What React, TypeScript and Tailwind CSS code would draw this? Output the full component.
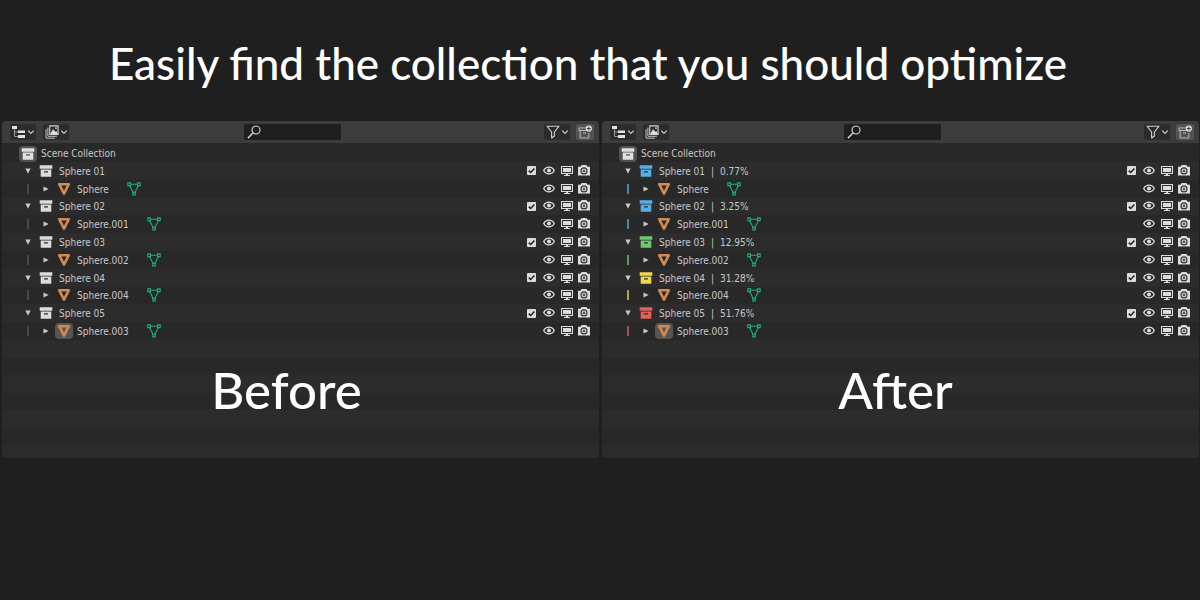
import React from 'react';

type Row = {
  name: string;
  percent?: string;
  object: string;
  color: string;
  active?: boolean;
};

const before: Row[] = [
  { name: 'Sphere 01', object: 'Sphere', color: '#dcdcdc' },
  { name: 'Sphere 02', object: 'Sphere.001', color: '#dcdcdc' },
  { name: 'Sphere 03', object: 'Sphere.002', color: '#dcdcdc' },
  { name: 'Sphere 04', object: 'Sphere.004', color: '#dcdcdc' },
  { name: 'Sphere 05', object: 'Sphere.003', color: '#dcdcdc', active: true },
];

const after: Row[] = [
  { name: 'Sphere 01', percent: '0.77%', object: 'Sphere', color: '#56aee6' },
  { name: 'Sphere 02', percent: '3.25%', object: 'Sphere.001', color: '#56aee6' },
  { name: 'Sphere 03', percent: '12.95%', object: 'Sphere.002', color: '#72c872' },
  { name: 'Sphere 04', percent: '31.28%', object: 'Sphere.004', color: '#ecd950' },
  { name: 'Sphere 05', percent: '51.76%', object: 'Sphere.003', color: '#e0605c', active: true },
];

const CollectionIcon = ({ color }: { color: string }) => (
  <svg width="14" height="14" viewBox="0 0 14 14" fill={color}>
    <path d="M.7 1.2h12.6v3.6H.7z" />
    <path fillRule="evenodd" d="M1.7 5.5h10.6v7.3H1.7zM5 7.2v1.4h4V7.2z" />
  </svg>
);

const ObjectIcon = () => (
  <svg width="14" height="14" viewBox="0 0 14 14" fill="none" stroke="#d08a52" strokeWidth="2.6" strokeLinejoin="round">
    <path d="M2.2 2.2h9.6L7 11.6z" />
  </svg>
);

const MeshIcon = () => (
  <svg width="14" height="14" viewBox="0 0 14 14" fill="none" stroke="#1fae7c" strokeWidth="1.1">
    <path d="M3.5 2.2h7M2.7 3.7l3.4 6.7M11.3 3.7l-3.4 6.7" />
    <path d="M.8.9h2.7v2.7H.8zM10.5.9h2.7v2.7h-2.7zM5.8 10.4h2.5v2.5H5.8z" />
  </svg>
);

const Chevron = () => (
  <svg width="8" height="8" viewBox="0 0 8 8" fill="none" stroke="#c8c8c8" strokeWidth="1.3">
    <path d="M1.2 2.6L4 5.4l2.8-2.8" />
  </svg>
);

const OutlinerIcon = () => (
  <svg width="14" height="14" viewBox="0 0 14 14">
    <path d="M2.5 3v8.5H6M2.5 7H6" fill="none" stroke="#999" strokeWidth="1" />
    <path d="M0 1h5v3H0zM6 5.5h7V8H6zM6 10h7v3H6z" fill="#e0e0e0" />
  </svg>
);

const DisplayIcon = () => (
  <svg width="14" height="14" viewBox="0 0 14 14" fill="none" stroke="#d4d4d4">
    <path d="M1 4.2v9h9M2.9 2.6v8.7h8.9" strokeWidth=".9" />
    <path d="M4.8.9h8.3v8.6H4.8z" strokeWidth="1.1" />
    <path d="M5.3 9l2.9-5 2 3 1-1.2L12.8 9z" fill="#e0e0e0" stroke="none" />
    <circle cx="11" cy="3.1" r=".9" fill="#e0e0e0" stroke="none" />
  </svg>
);

const SearchIcon = () => (
  <svg width="14" height="14" viewBox="0 0 14 14" fill="none" stroke="#cfcfcf" strokeWidth="1.2" className="pointer-events-none">
    <circle cx="9" cy="5" r="4" />
    <path d="M6.2 7.8L.9 13.1" strokeWidth="1.5" />
  </svg>
);

const FilterIcon = () => (
  <svg width="14" height="14" viewBox="0 0 14 14" fill="none" stroke="#cfcfcf" strokeWidth="1.1" strokeLinejoin="round">
    <path d="M1 1.2h12L8.4 7v4l-2.8 2V7z" />
  </svg>
);

const NewCollectionIcon = () => (
  <svg width="14" height="14" viewBox="0 0 14 14" fill="none" stroke="#b4b4b4">
    <path d="M7.5 2.9H1v2.6h8M2.2 5.5V13h8.6V8.2M5 8h3" />
    <circle cx="10.8" cy="3.6" r="3.1" fill="#e0e0e0" stroke="none" />
    <path d="M10.8 1.6v4M8.8 3.6h4" stroke="#444" />
  </svg>
);

const EyeIcon = () => (
  <svg width="14" height="14" viewBox="0 0 14 14" fill="none" stroke="#dcdcdc">
    <path d="M1.7 6.5C4 2.1 10 2.1 12.3 6.5 10 10.9 4 10.9 1.7 6.5z" strokeWidth="1.3" />
    <circle cx="7" cy="6.5" r="2" fill="#dcdcdc" stroke="none" />
  </svg>
);

const MonitorIcon = () => (
  <svg width="14" height="14" viewBox="0 0 14 14">
    <path fillRule="evenodd" fill="#dcdcdc" d="M1 2h12v8H1zM2.1 3.1v5.8h9.8V3.1z" />
    <path fill="#dcdcdc" d="M3 4h8v4H3zM6 10h2v1h2v1H4v-1h2z" />
  </svg>
);

const CameraIcon = () => (
  <svg width="14" height="14" viewBox="0 0 14 14">
    <path fill="#dcdcdc" d="M1 2.8h2.4L4.6 1h4.8l1.2 1.8H13v8.7H1z" />
    <circle cx="7" cy="6.9" r="3" fill="none" stroke="#333" strokeWidth="1.1" />
    <circle cx="7" cy="6.9" r="1.4" fill="#555" />
  </svg>
);

const Cell = ({ children }: { children?: React.ReactNode }) => (
  <span className="flex w-[18px] shrink-0 items-center justify-center">{children}</span>
);

const Expander = ({ open, label }: { open?: boolean; label: string }) => (
  <button aria-label={label} className="flex w-[18px] shrink-0 items-center justify-center">
    <svg width="6" height="6" viewBox="0 0 6 6" fill="#c8c8c8">
      {open ? <path d="M.4.5h5.2L3 5.7z" /> : <path d="M.5.4v5.2L5.7 3z" />}
    </svg>
  </button>
);

const Toggles = ({ name, checkable }: { name: string; checkable?: boolean }) => (
  <div className="ml-auto flex items-center">
    {checkable && (
      <label className="grid w-[18px] place-items-center">
        <input
          type="checkbox"
          defaultChecked
          aria-label={`Include ${name}`}
          className="col-start-1 row-start-1 size-[9px] appearance-none rounded-[1px] bg-[#dcdcdc]"
        />
        <svg width="9" height="9" viewBox="0 0 9 9" fill="none" stroke="#222" strokeWidth="1.5" className="pointer-events-none col-start-1 row-start-1">
          <path d="M1.8 4.6l1.9 1.9 3.7-4" />
        </svg>
      </label>
    )}
    <button aria-label={`Hide ${name}`} className="flex w-[18px] justify-center"><EyeIcon /></button>
    <button aria-label={`Disable ${name} in viewports`} className="flex w-[17px] justify-center"><MonitorIcon /></button>
    <button aria-label={`Disable ${name} in renders`} className="flex w-[18px] justify-center"><CameraIcon /></button>
  </div>
);

type OutlinerProps = { rows: Row[]; colored?: boolean; title: string; titleClass: string };

const Outliner = ({ rows, colored, title, titleClass }: OutlinerProps) => (
  <section className="overflow-hidden rounded-[4px] bg-[#282828] font-['DejaVu_Sans_Condensed','DejaVu_Sans',sans-serif] text-[10px] leading-3 text-[#c8c8c8]">
    {/* Header */}
    <header className="flex h-[22px] items-center bg-[#3c3c3c] pr-[5px] pl-2">
      <div className="flex flex-1 gap-[7px]">
        <button aria-label="Editor type" className="flex h-4 w-[26px] items-center justify-center gap-px rounded-[2px] bg-[#2c2c2c]">
          <OutlinerIcon />
          <Chevron />
        </button>
        <button aria-label="Display mode" className="flex h-4 w-[26px] items-center justify-center gap-px rounded-[2px] bg-[#2c2c2c]">
          <DisplayIcon />
          <Chevron />
        </button>
      </div>
      <label className="mr-5 flex h-4 w-[97px] items-center rounded-[2px] bg-[#1e1e1e] px-[3px]">
        <SearchIcon />
        <input type="search" aria-label="Search" className="min-w-0 flex-1 bg-transparent pl-1 outline-none" />
      </label>
      <div className="flex flex-1 justify-end gap-1.5">
        <button aria-label="Filter" className="flex h-4 w-[26px] items-center justify-center gap-px rounded-[2px] bg-[#2c2c2c]">
          <FilterIcon />
          <Chevron />
        </button>
        <button aria-label="New collection" className="flex h-4 w-[18px] items-center justify-center rounded-[2px] bg-[#545454]">
          <NewCollectionIcon />
        </button>
      </div>
    </header>

    {/* Tree */}
    <div className="flex h-[19px] items-center pt-0.5 pl-[17px]">
      <span className="flex h-4 w-[18px] items-center justify-center rounded-[4px] bg-[#505050]">
        <CollectionIcon color="#e0e0e0" />
      </span>
      <span className="ml-1">Scene Collection</span>
    </div>
    <div className="grid h-[178px] auto-rows-fr">
      {rows.map((row) => (
        <React.Fragment key={row.name}>
          <div className="flex items-center bg-[#2c2c2c] pr-[6px] pl-[17px]">
            <Expander open label={`Collapse ${row.name}`} />
            <Cell><CollectionIcon color={row.color} /></Cell>
            <span className="ml-1 flex gap-1.5 pt-0.5">
              <span>{row.name}</span>
              {row.percent && (
                <>
                  <span>|</span>
                  <span>{row.percent}</span>
                </>
              )}
            </span>
            <Toggles name={row.name} checkable />
          </div>
          <div className="flex items-center pr-[6px] pl-[17px]">
            <Cell>
              <svg width="2" height="10" viewBox="0 0 2 10" stroke={colored ? row.color : '#555555'}>
                <path d="M1 0v10" strokeWidth="1.4" />
              </svg>
            </Cell>
            <Expander label={`Expand ${row.object}`} />
            <span className={`flex h-4 w-[18px] items-center justify-center rounded-[4px] ${row.active ? 'bg-[#585653]' : ''}`}>
              <ObjectIcon />
            </span>
            <span className="mr-[18px] ml-1 pt-0.5">{row.object}</span>
            <MeshIcon />
            <Toggles name={row.object} />
          </div>
        </React.Fragment>
      ))}
    </div>

    {/* Empty rows with the caption over them */}
    <div className="relative">
      <div className="grid h-[105px] auto-rows-fr">
        {[0, 1, 2, 3, 4, 5].map((i) => (
          <div key={i} className="odd:bg-[#2c2c2c]" />
        ))}
      </div>
      <div className="h-[13px] bg-[#2c2c2c]" />
      <h2 className={`absolute inset-x-0 top-5 text-center font-[Lato,sans-serif] text-[51px] leading-[60px] font-medium text-white ${titleClass}`}>
        {title}
      </h2>
    </div>
  </section>
);

export default function App() {
  return (
    <main className="min-h-screen bg-[#1f1f1f]">
      <h1 className="pt-9 pr-6 pb-[31px] text-center font-[Lato,sans-serif] text-[44px] leading-[54px] font-medium text-white">
        Easily find the collection that you should optimize
      </h1>
      <div className="grid grid-cols-2 gap-[3px] pr-px pl-0.5">
        <Outliner rows={before} title="Before" titleClass="pr-7" />
        <Outliner rows={after} colored title="After" titleClass="pr-2.5" />
      </div>
    </main>
  );
}
